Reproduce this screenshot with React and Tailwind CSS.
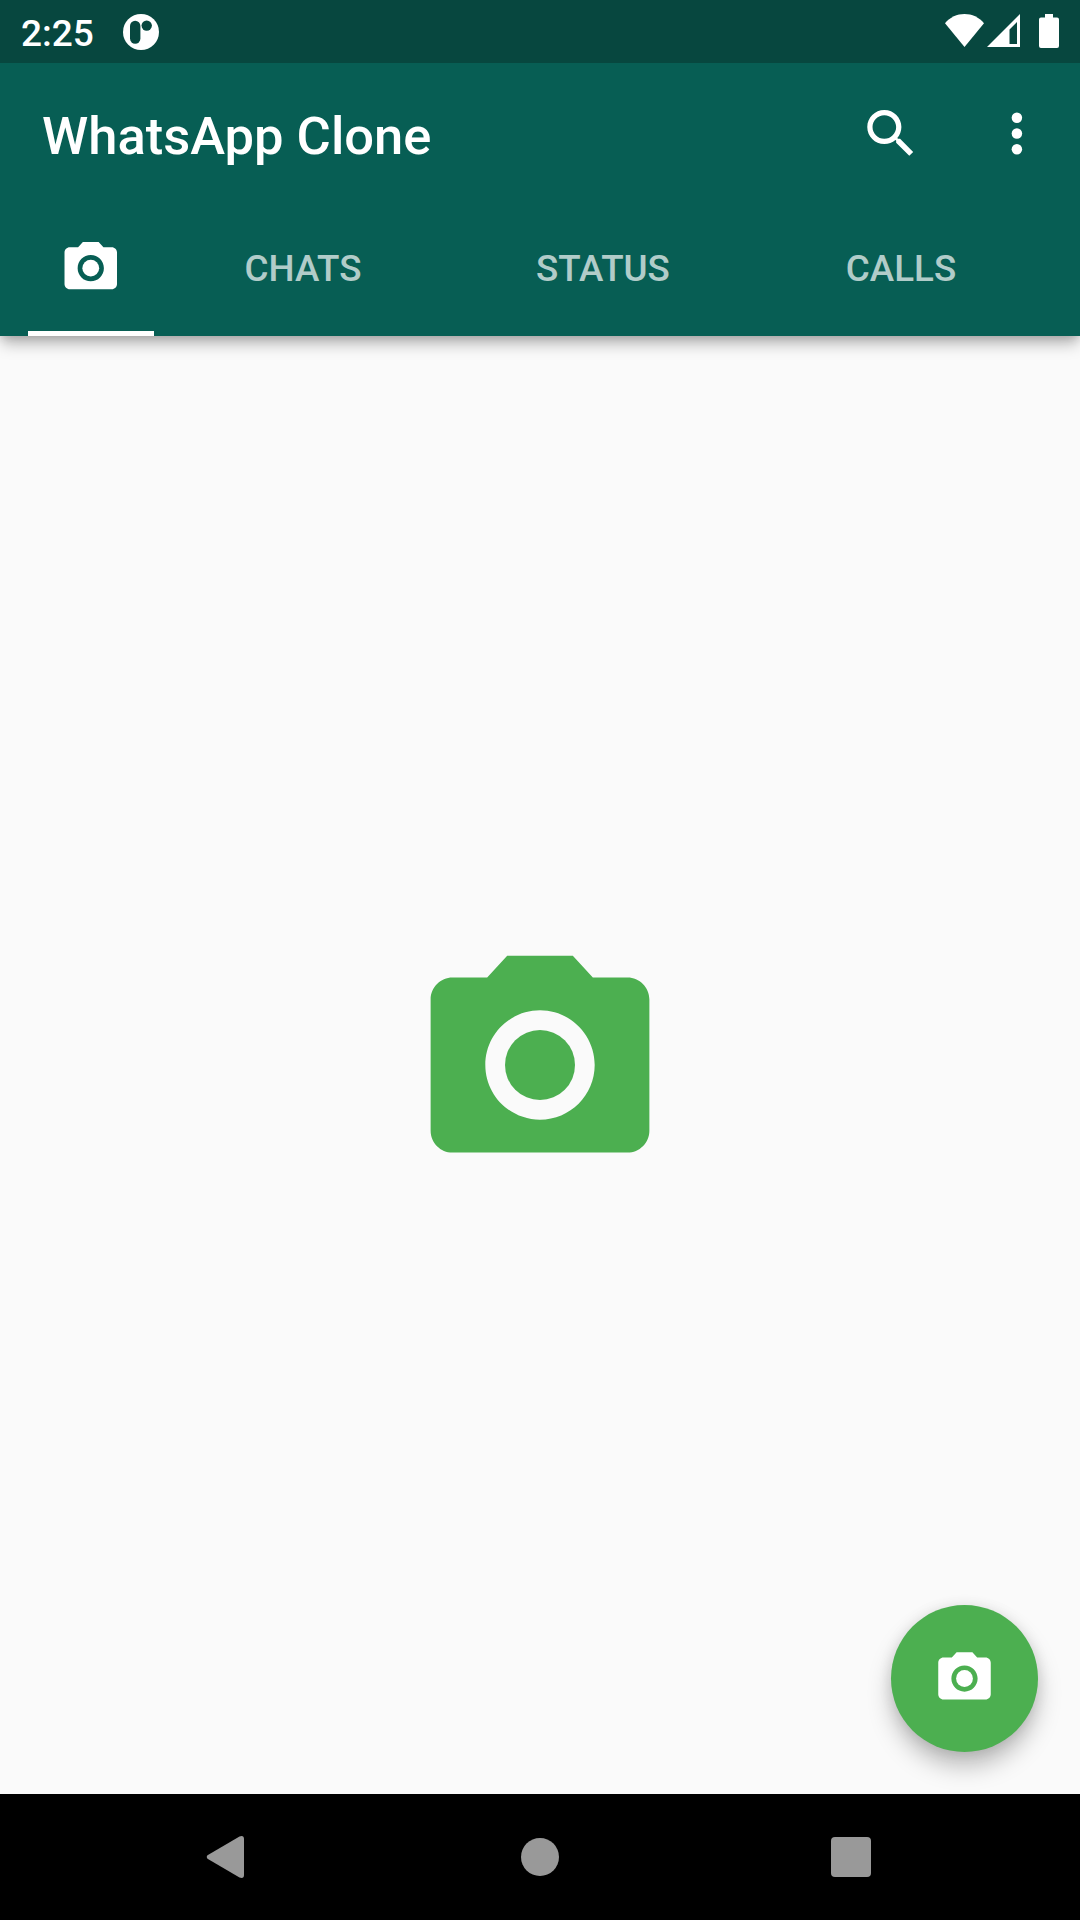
const TABS = [
  { label: "CHATS", nudge: "pr-[2px]" },
  { label: "STATUS", nudge: "pr-0" },
  { label: "CALLS", nudge: "pr-[2px]" },
];

function CameraIcon({ className, viewBox = "0 0 24 24" }) {
  return (
    <svg viewBox={viewBox} fill="currentColor" className={className} aria-hidden="true">
      <circle cx="12" cy="12" r="3.2" />
      <path d="M9 2L7.17 4H4c-1.1 0-2 .9-2 2v12c0 1.1.9 2 2 2h16c1.1 0 2-.9 2-2V6c0-1.1-.9-2-2-2h-3.17L15 2H9zm3 15c-2.76 0-5-2.24-5-5s2.24-5 5-5 5 2.24 5 5-2.24 5-5 5z" />
    </svg>
  );
}

function SearchIcon() {
  return (
    <svg viewBox="-0.15 0 24 24" fill="currentColor" className="size-[63px]">
      <path d="M15.5 14h-.79l-.28-.27C15.41 12.59 16 11.11 16 9.5 16 5.91 13.09 3 9.5 3S3 5.91 3 9.5 5.91 16 9.5 16c1.61 0 3.09-.59 4.23-1.57l.27.28v.79l5 4.99L20.49 19l-4.99-5zm-6 0C7.01 14 5 11.99 5 9.5S7.01 5 9.5 5 14 7.01 14 9.5 11.99 14 9.5 14z" />
    </svg>
  );
}

function MoreIcon() {
  return (
    <svg viewBox="-0.15 0 24 24" fill="currentColor" className="size-[63px]">
      <circle cx="12" cy="6" r="2" />
      <circle cx="12" cy="12" r="2" />
      <circle cx="12" cy="18" r="2" />
    </svg>
  );
}

function StatusBar() {
  return (
    <div className="flex h-[63px] items-center bg-[#07473f] px-[21px]">
      <span className="mt-[4px] w-[102px] text-[37px] leading-none font-medium">2:25</span>
      <svg viewBox="0 0 36 36" className="size-9">
        <circle cx="18" cy="18" r="18" fill="#fff" />
        <rect x="7" y="6.7" width="10.4" height="23" rx="5.2" fill="#07473f" />
        <circle cx="23.7" cy="11.6" r="5.2" fill="#07473f" />
      </svg>
      <div className="mb-[2px] ml-auto flex items-center">
        <svg viewBox="0 0 39 33" className="mr-[3px] h-[33px] w-[39px]" fill="#fff">
          <path d="M19.5 33L0 9.2C5 3.200 12 0 19.5 0S34 3.200 39 9.200Z" />
        </svg>
        <svg viewBox="0 0 33 33" className="mr-[19px] h-[33px] w-[33px]" fill="#fff">
          <path fillRule="evenodd" d="M33 0V33H0ZM30 8L22.500 15.500V30H30Z" />
        </svg>
        <svg viewBox="0 0 20 34" className="h-[34px] w-5" fill="#fff">
          <path d="M6 0h8v3.500h4a2 2 0 0 1 2 2V32a2 2 0 0 1-2 2H2a2 2 0 0 1-2-2V5.500a2 2 0 0 1 2-2h4Z" />
        </svg>
      </div>
    </div>
  );
}

export default function App() {
  return (
    <div className="flex h-[1920px] w-[1080px] flex-col overflow-hidden bg-[#fafafa] font-['Roboto',sans-serif] text-white">
      <header className="z-10 shrink-0 bg-[#075e54] shadow-[0_10px_14px_-2px_rgba(0,0,0,0.26),0_0_10px_0_rgba(0,0,0,0.2)]">
        <StatusBar />
        <div className="flex h-[147px] items-center pr-[32px] pl-[42px]">
          <h1 className="text-[52.5px] leading-none font-medium">WhatsApp Clone</h1>
          <div className="mb-[6px] ml-auto flex gap-[63px]">
            <SearchIcon />
            <MoreIcon />
          </div>
        </div>
        <nav className="flex h-[126px] px-[28px]">
          <div className="flex w-[126px] items-center justify-center border-b-[5px] border-white pb-[5px]">
            <CameraIcon className="size-[64px]" viewBox="-0.1 -0.25 24.38 24.38" />
          </div>
          {TABS.map(({ label, nudge }) => (
            <div
              key={label}
              className={`flex flex-1 items-center justify-center border-b-[5px] border-transparent pb-[2px] text-[36.75px] leading-none font-medium text-white/70 ${nudge}`}
            >
              {label}
            </div>
          ))}
        </nav>
      </header>

      <main className="relative flex flex-1 items-center justify-center">
        <CameraIcon className="size-[264px] text-[#4caf50]" viewBox="-0.0686 -0.0686 24.137 24.137" />
        <button className="absolute right-[42px] bottom-[42px] flex size-[147px] items-center justify-center rounded-full bg-[#4caf50] shadow-[0_15px_24px_-1px_rgba(0,0,0,0.26),0_1px_14px_0_rgba(0,0,0,0.1)]">
          <CameraIcon className="size-[63px]" />
        </button>
      </main>

      <footer className="z-10 flex h-[126px] shrink-0 items-center bg-black pl-[206px] text-[#999]">
        <svg viewBox="0 0 38 42" className="mr-[277px] h-[42px] w-[38px]" fill="currentColor">
          <path d="M1.500 19.300L33.500 .5Q38 -1 38 3V39Q38 43 33.500 41.500L1.500 22.700Q0 21 1.500 19.300Z" />
        </svg>
        <div className="mr-[272.5px] size-[37.5px] rounded-full bg-[#999]" />
        <div className="size-10 rounded-[4px] bg-[#999]" />
      </footer>
    </div>
  );
}
